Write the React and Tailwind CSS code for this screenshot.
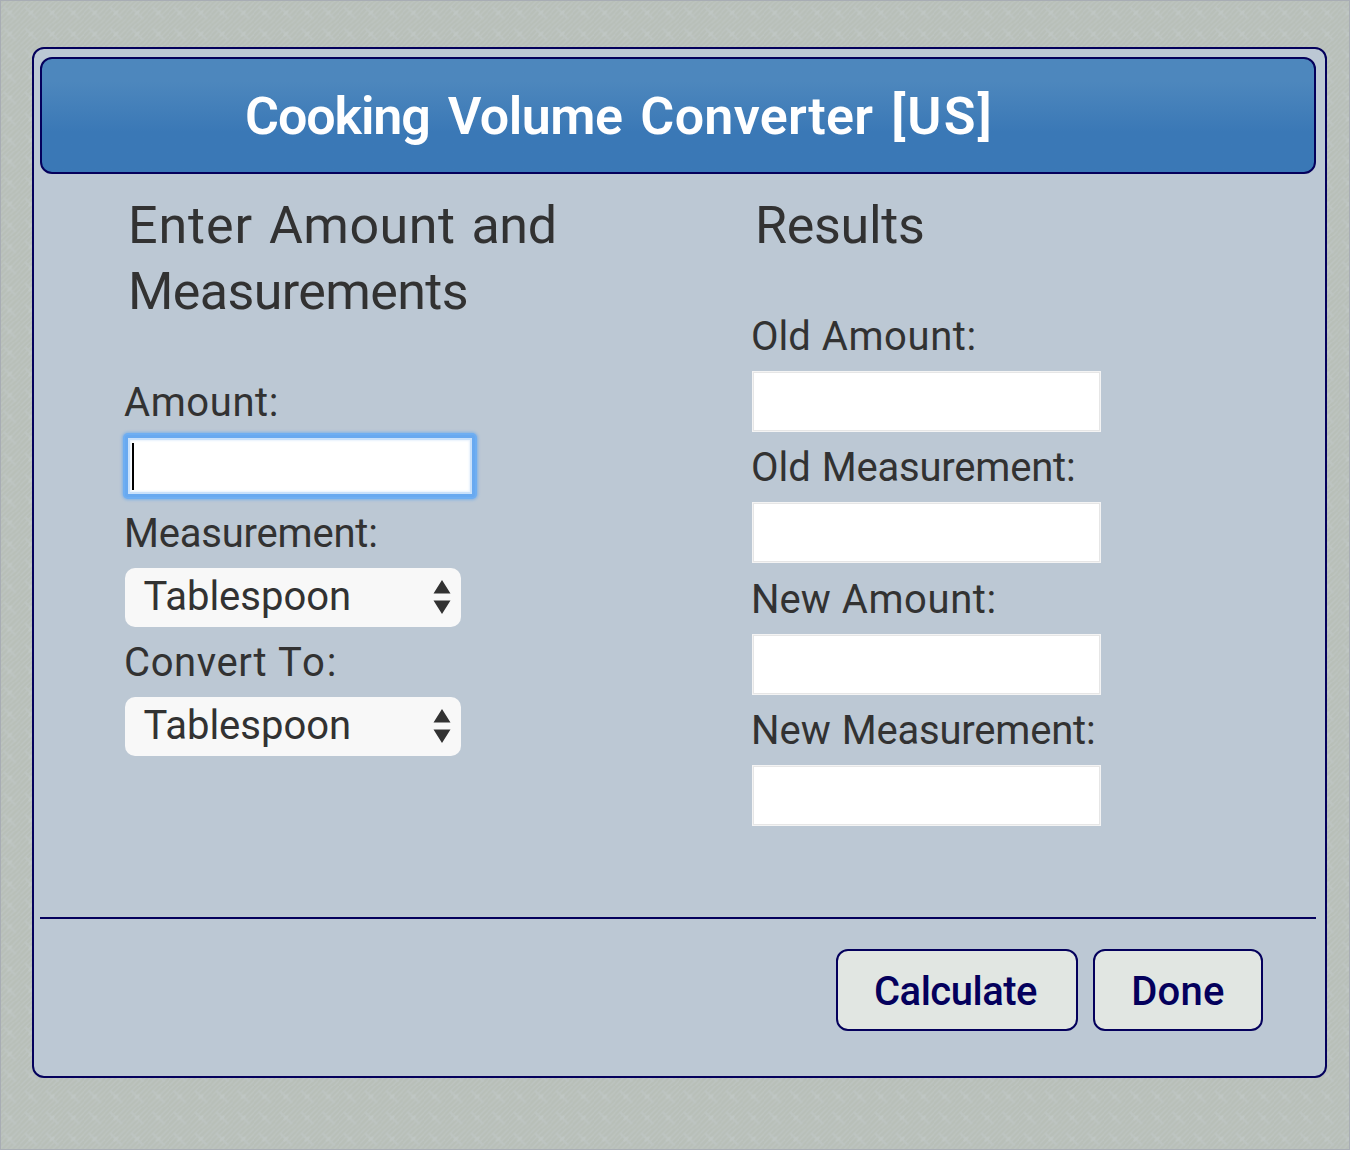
import React from "react";

function Weave() {
  return (
    <svg className="absolute inset-0 h-full w-full" aria-hidden="true">
      <defs>
        <pattern id="weave" x="-1" y="2.2" width="21.25" height="21.25" patternUnits="userSpaceOnUse">
          <rect width="22" height="22" fill="#b8bfb8" />
          <g stroke="#bdc4c0" strokeWidth="1.6" fill="none">
            <path d="M-2 12 L12 -2" />
            <path d="M-2 17.3 L17.3 -2" />
            <path d="M0 21.25 L21.25 0" />
            <path d="M4 22.6 L22.6 4" />
            <path d="M9 23 L23 9" />
            <path d="M-2 7 L7 -2" />
            <path d="M14.5 23 L23 14.5" />
          </g>
          <path d="M4.5 4.5 L17 17" stroke="#bdc4c1" strokeWidth="2.4" />
          <path d="M8.5 12.7 L12.7 8.5" stroke="#c0c7c4" strokeWidth="2.4" />
        </pattern>
      </defs>
      <rect width="100%" height="100%" fill="url(#weave)" />
    </svg>
  );
}

const wordTracking = {
  "Amount:": "tracking-[0.6px]",
  "Measurement:": "tracking-[-0.2px]",
  Convert: "tracking-[0.6px]",
  "To:": "tracking-[2px]",
};

function Label({ text }) {
  return (
    <label className="block h-12 whitespace-nowrap text-[40px] leading-[49px] [word-spacing:1px]">
      {text.split(" ").map((word, i) => (
        <React.Fragment key={word}>
          {i > 0 && " "}
          <span className={wordTracking[word]}>{word}</span>
        </React.Fragment>
      ))}
    </label>
  );
}

function Select({ value }) {
  return (
    <button className="ml-px flex h-[59px] w-[336px] items-center justify-between rounded-[10px] bg-[#f8f8f8] pr-[10px] pl-[18.5px] text-[40px]">
      <span className="pb-px leading-[48px]">{value}</span>
      <svg className="mb-px" width="18" height="34" viewBox="0 0 18 34" fill="#323232">
        <path d="M9 0 L17.5 13.5 H0.5 Z M0.5 20.5 H17.5 L9 34 Z" />
      </svg>
    </button>
  );
}

function Result({ label }) {
  return (
    <div className="h-[131.3px]">
      <Label text={label} />
      <div className="mt-[11px] ml-[1px] h-[61px] w-[349px] border border-[#f4f4f4] bg-white">
        <div className="h-full w-full border border-[#e6e6e6]" />
      </div>
    </div>
  );
}

function ActionButton({ className, children }) {
  return (
    <button
      className={
        "h-[82px] rounded-xl border-2 border-[#04005c] bg-[#e1e6e2] pt-[3px] text-[40px] font-medium text-[#04005c] " +
        className
      }
    >
      {children}
    </button>
  );
}

export default function App() {
  return (
    <div className="relative h-[1150px] w-[1350px] overflow-hidden bg-[#b9c0ba] pt-[47px] pl-8 font-['Roboto',sans-serif] text-[#323232]">
      <Weave />
      <main className="relative h-[1031px] w-[1295px] rounded-xl border-2 border-[#04005c] bg-[#bcc8d4] pt-2 pr-[9px] pl-[6px]">
        <header className="h-[117px] rounded-xl border-2 border-[#04005c] bg-linear-to-b from-[#4d87bd] from-20% to-[#3a78b6] to-65% pl-[203px]">
          <h1 className="whitespace-nowrap text-[52px] leading-[116px] font-semibold text-white [word-spacing:5px]">
            <span className="tracking-[-1.1px]">Cooking</span> <span className="tracking-[-0.5px]">Volume</span>{" "}
            <span className="tracking-[0.3px]">Converter</span> <span className="tracking-[2.2px]">[US]</span>
          </h1>
        </header>

        <div className="flex h-[745px] border-b-2 border-[#04005c] pl-[84px]">
          <section className="w-[627px] pt-[19px]">
            <h2 className="w-[450px] pl-[4px] text-[52px] leading-[66px] [word-spacing:3px]">
              <span className="tracking-[0.9px]">Enter</span> <span className="tracking-[0.5px]">Amount</span>{" "}
              <span className="tracking-[-0.3px]">and</span> <span className="tracking-[-0.6px]">Measurements</span>
            </h2>
            <div className="mt-[53px]">
              <Label text="Amount:" />
              <div className="mt-[9px] ml-px flex h-[62px] w-[350px] items-center rounded-[3px] border-3 border-[#68a9f0] bg-white pl-[4px] shadow-[0_0_0_2px_#6eaef2,0_0_3px_3px_#83b2e5,inset_0_0_0_2px_#c9e1fb,inset_0_0_2px_3px_#e8f2fd]">
                <span className="h-[47px] w-[2px] bg-black" />
              </div>
            </div>
            <div className="mt-3">
              <Label text="Measurement:" />
              <div className="mt-[11px]">
                <Select value="Tablespoon" />
              </div>
            </div>
            <div className="mt-[11px]">
              <Label text="Convert To:" />
              <div className="mt-[11px]">
                <Select value="Tablespoon" />
              </div>
            </div>
          </section>

          <section className="pt-[19px]">
            <h2 className="pl-[4px] text-[52px] leading-[66px] tracking-[-0.3px]">Results</h2>
            <div className="mt-[53px]">
              <Result label="Old Amount:" />
              <Result label="Old Measurement:" />
              <Result label="New Amount:" />
              <Result label="New Measurement:" />
            </div>
          </section>
        </div>

        <footer className="flex justify-end gap-[15px] pt-[30px] pr-[53px]">
          <ActionButton className="w-[242px] pr-[3px] tracking-[-0.5px]">Calculate</ActionButton>
          <ActionButton className="w-[170px] tracking-[0.3px]">Done</ActionButton>
        </footer>
      </main>
      <div className="pointer-events-none absolute inset-0 border border-[#a8adb4]" />
    </div>
  );
}
